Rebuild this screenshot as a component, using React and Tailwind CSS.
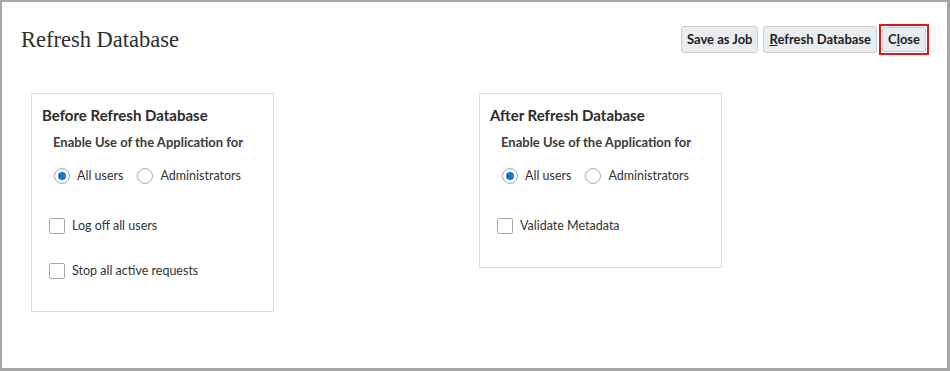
import React from 'react';

function Radio({ checked, label }) {
  return (
    <label className="flex items-center gap-[7px]">
      <span className="flex h-[16px] w-[16px] items-center justify-center rounded-full border border-[#a7a7a7] bg-white">
        {checked && <span className="h-[8px] w-[8px] rounded-full bg-[#1a73d1]" />}
      </span>
      <span>{label}</span>
    </label>
  );
}

function Checkbox({ label }) {
  return (
    <label className="flex items-center gap-[7px]">
      <span className="h-[16px] w-[16px] rounded-[2px] border border-[#a7a7a7] bg-white" />
      <span>{label}</span>
    </label>
  );
}

function Panel({ title, checks }) {
  return (
    <div className="w-[243px] border border-[#dcdcdc] px-[10px] pt-[11px] pb-[31px]">
      <h2 className="text-[15px] font-bold leading-[20px] text-[#2b2b2b]">{title}</h2>
      <p className="mt-[8px] pl-[11px] text-[13px] font-bold leading-[18px] text-[#3a3a3a]">
        Enable Use of the Application for
      </p>
      <div className="mt-[16px] flex items-center gap-[14px] pl-[12px] text-[12.5px] text-[#333]">
        <Radio checked label="All users" />
        <Radio label="Administrators" />
      </div>
      <div className="mt-[31px] flex flex-col gap-[26px] pl-[7px] text-[12.5px] text-[#333]">
        {checks.map((c) => (
          <Checkbox key={c} label={c} />
        ))}
      </div>
    </div>
  );
}

export default function App() {
  return (
    <div
      className="h-[371px] w-[950px] border-t-2 border-r-[3px] border-b-[3px] border-l-2 border-[#a6a6a6] bg-white"
      style={{ fontFamily: 'Lato, "Noto Sans", sans-serif' }}
    >
      <div className="flex items-start justify-between pt-[22px] pr-[18px] pl-[19px]">
        <h1
          className="pt-[4px] text-[22.5px] leading-[24px] text-[#2f2f2f]"
          style={{ fontFamily: '"Liberation Serif", serif' }}
        >
          Refresh Database
        </h1>
        <div className="flex items-center gap-[5px] text-[13px] font-bold text-[#1e1e1e]">
          <button className="h-[27px] rounded-[3px] border border-[#c9ced3] bg-[#e9edf0] px-[5px]">
            Save as Job
          </button>
          <button className="h-[27px] rounded-[3px] border border-[#c9ced3] bg-[#e9edf0] px-[5px]">
            <span className="underline">R</span>efresh Database
          </button>
          <span className="-ml-[3px] border-2 border-[#e0161b] p-px">
            <button className="h-[25px] rounded-[2px] border border-[#c9ced3] bg-[#e9edf0] px-[5px]">
              C<span className="underline">l</span>ose
            </button>
          </span>
        </div>
      </div>
      <div className="mt-[38px] flex items-start gap-[205px] pl-[29px]">
        <Panel title="Before Refresh Database" checks={['Log off all users', 'Stop all active requests']} />
        <Panel title="After Refresh Database" checks={['Validate Metadata']} />
      </div>
    </div>
  );
}
